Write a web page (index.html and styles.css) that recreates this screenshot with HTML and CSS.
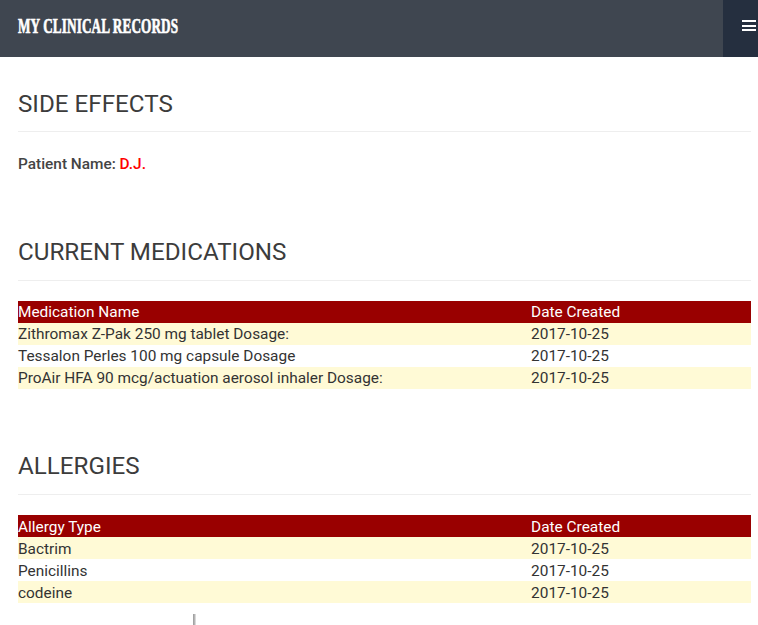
FILE: index.html
```html
<!DOCTYPE html>
<html lang="en">
<head>
<meta charset="utf-8">
<title>My Clinical Records</title>
<link rel="stylesheet" href="styles.css">
</head>
<body>
<header class="topbar">
  <div class="brand">MY CLINICAL RECORDS</div>
  <button class="menu" aria-label="Menu">
    <svg width="14" height="11" viewBox="0 0 14 11"><path d="M0 0h14v2H0zM0 5h14v2H0zM0 9h14v2H0z" fill="#fff"/></svg>
  </button>
</header>
<main class="content">
  <section class="intro">
    <h3 class="title">SIDE EFFECTS</h3>
    <p class="patient"><b>Patient Name: <span class="name">D.J.</span></b></p>
  </section>
  <section class="block">
    <h3 class="title">CURRENT MEDICATIONS</h3>
    <table class="data">
      <thead><tr><th class="c1">Medication Name</th><th>Date Created</th></tr></thead>
      <tbody>
        <tr><td>Zithromax Z-Pak 250 mg tablet Dosage:</td><td>2017-10-25</td></tr>
        <tr><td>Tessalon Perles 100 mg capsule Dosage</td><td>2017-10-25</td></tr>
        <tr><td>ProAir HFA 90 mcg/actuation aerosol inhaler Dosage:</td><td>2017-10-25</td></tr>
      </tbody>
    </table>
  </section>
  <section class="block">
    <h3 class="title">ALLERGIES</h3>
    <table class="data">
      <thead><tr><th class="c1">Allergy Type</th><th>Date Created</th></tr></thead>
      <tbody>
        <tr><td>Bactrim</td><td>2017-10-25</td></tr>
        <tr><td>Penicillins</td><td>2017-10-25</td></tr>
        <tr><td>codeine</td><td>2017-10-25</td></tr>
      </tbody>
    </table>
  </section>
  <div class="mark"></div>
</main>
</body>
</html>
```
FILE: styles.css
```css
* { box-sizing: border-box; }
html, body { margin: 0; padding: 0; }
body { height: 625px; overflow: hidden; background: #fff; font-family: Roboto, sans-serif; font-size: 15.4px; color: #333; }
.topbar { display: flex; justify-content: space-between; height: 57px; background: #3f4650; }
.brand { align-self: flex-start; margin: 13px 0 0 18px; font-family: "Liberation Serif", serif; font-weight: 700; font-size: 22px; line-height: 26px; letter-spacing: 0.2px; color: #fff; white-space: nowrap; transform: scaleX(0.6); transform-origin: left center; -webkit-text-stroke: 0.7px #fff; }
.menu { display: flex; justify-content: flex-end; align-items: flex-start; width: 35px; padding: 20px 2px 0 0; border: 0; background: #252f3f; }
.content { padding: 0 7px 0 18px; }
.title { margin: 0; padding-bottom: 14px; border-bottom: 1px solid #eee; font-size: 24.2px; line-height: 28px; font-weight: 400; color: #3c3c3c; }
.intro { padding-top: 33px; }
.intro .title { padding-bottom: 13px; }
.patient { margin: 0; padding-top: 23px; height: 106px; line-height: 18px; color: #444; }
.patient b { font-weight: 500; }
.name { color: #f00; }
.block .title { margin-bottom: 20px; }
.block + .block { margin-top: 63px; }
.data { width: 100%; border-collapse: collapse; table-layout: fixed; }
.data th, .data td { padding: 0; height: 22px; line-height: 22px; font-weight: 400; text-align: left; }
.block + .block .data th, .block + .block .data td { padding-top: 2px; line-height: 20px; }
.data th { background: #990000; color: #fff; }
.data .c1 { width: 70%; }
.data tbody tr:nth-child(odd) td { background: #fffad6; }
.mark { position: absolute; left: 193px; top: 614px; width: 3px; height: 11px; background: linear-gradient(90deg, #999, #bbb 60%, #eee); }
```
